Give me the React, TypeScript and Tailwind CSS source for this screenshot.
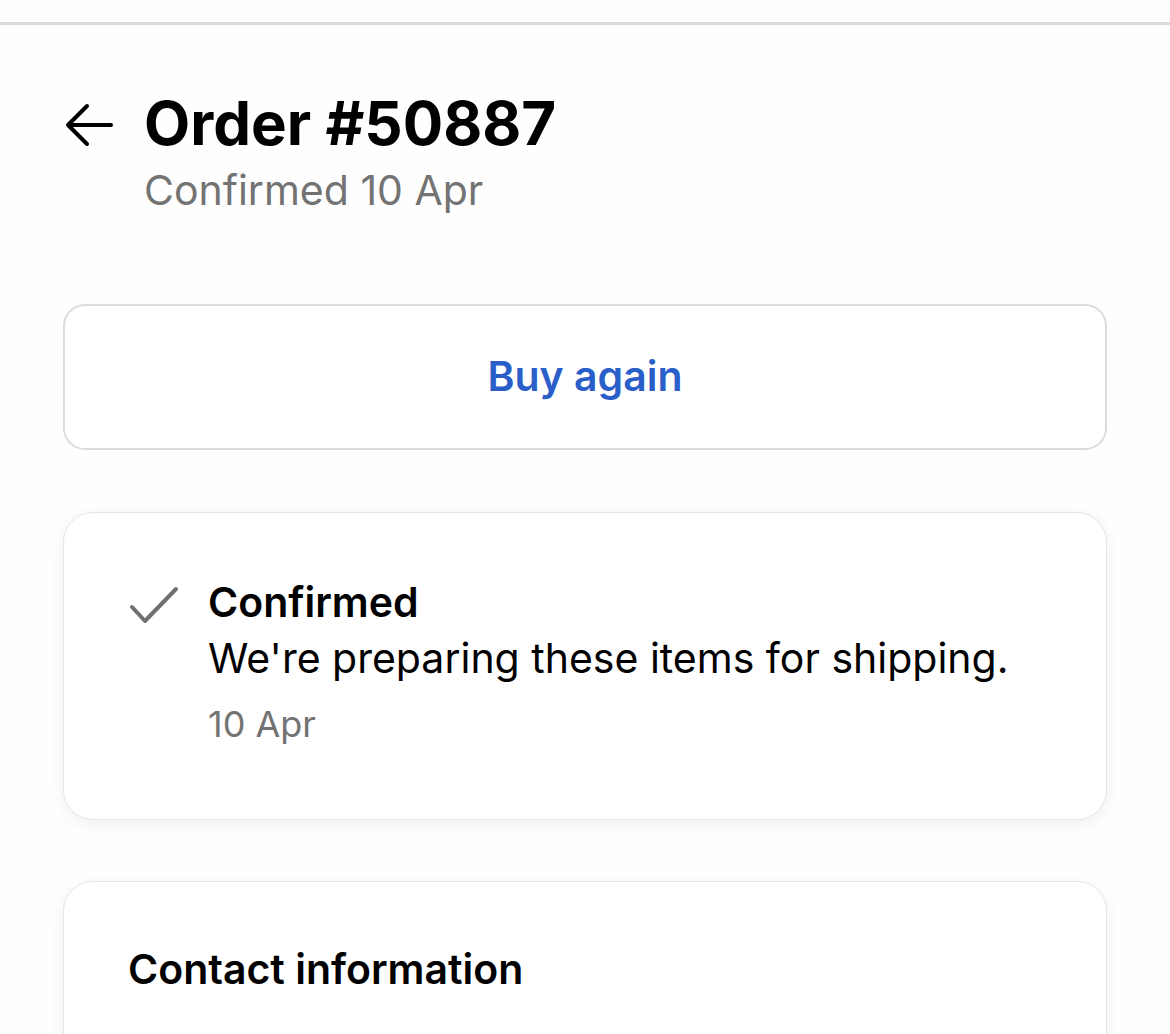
import React from "react";

export default function App() {
  return (
    <div className="min-h-[1034px] w-[1170px] overflow-hidden bg-[#fefefe]" style={{ fontFamily: "Inter, 'Noto Sans', sans-serif" }}>
      <div className="h-[25px] border-b-[3px] border-[#dcdcdc]" />
      <div className="px-[63px]">
        <div className="mt-[62px] flex items-start">
          <div className="w-[81px] pl-[1px] pt-[16px]">
            <svg width="50" height="44" viewBox="0 0 50 44" fill="none" stroke="#000" strokeWidth="4" strokeLinecap="round" strokeLinejoin="round">
              <path d="M47 22H5" />
              <path d="M23 3L4 22l19 19" />
            </svg>
          </div>
          <div>
            <div className="text-[60px] font-bold leading-[72px] text-black">Order #50887</div>
            <div className="mt-[7px] text-[41px] leading-[48px] text-[#737373]">Confirmed 10 Apr</div>
          </div>
        </div>

        <div className="mt-[90px] flex h-[146px] items-center justify-center rounded-[22px] border-2 border-[#dcdcdc] bg-white">
          <span className="text-[41px] font-semibold text-[#2a5fca]">Buy again</span>
        </div>

        <div className="mt-[62px] rounded-[30px] border border-[#e6e6e6] bg-white px-[65px] pb-[71px] pt-[62px] shadow-[0_4px_16px_rgba(0,0,0,0.06)]">
          <div className="flex items-start">
            <div className="w-[79px] pt-[11px]">
              <svg width="50" height="40" viewBox="0 0 50 40" fill="none" stroke="#707070" strokeWidth="4" strokeLinecap="round" strokeLinejoin="round">
                <path d="M3 21l13 14L47 3" />
              </svg>
            </div>
            <div>
              <div className="text-[41px] font-semibold leading-[54px] text-black">Confirmed</div>
              <div className="text-[41px] leading-[58px] text-black">We're preparing these items for shipping.</div>
              <div className="mt-[13px] text-[36px] leading-[48px] text-[#737373]">10 Apr</div>
            </div>
          </div>
        </div>

        <div className="mt-[61px] h-[300px] rounded-[30px] border border-[#e6e6e6] bg-white px-[64px] pt-[60px] shadow-[0_4px_16px_rgba(0,0,0,0.06)]">
          <div className="text-[41px] font-semibold leading-[54px] text-black">Contact information</div>
        </div>
      </div>
    </div>
  );
}
